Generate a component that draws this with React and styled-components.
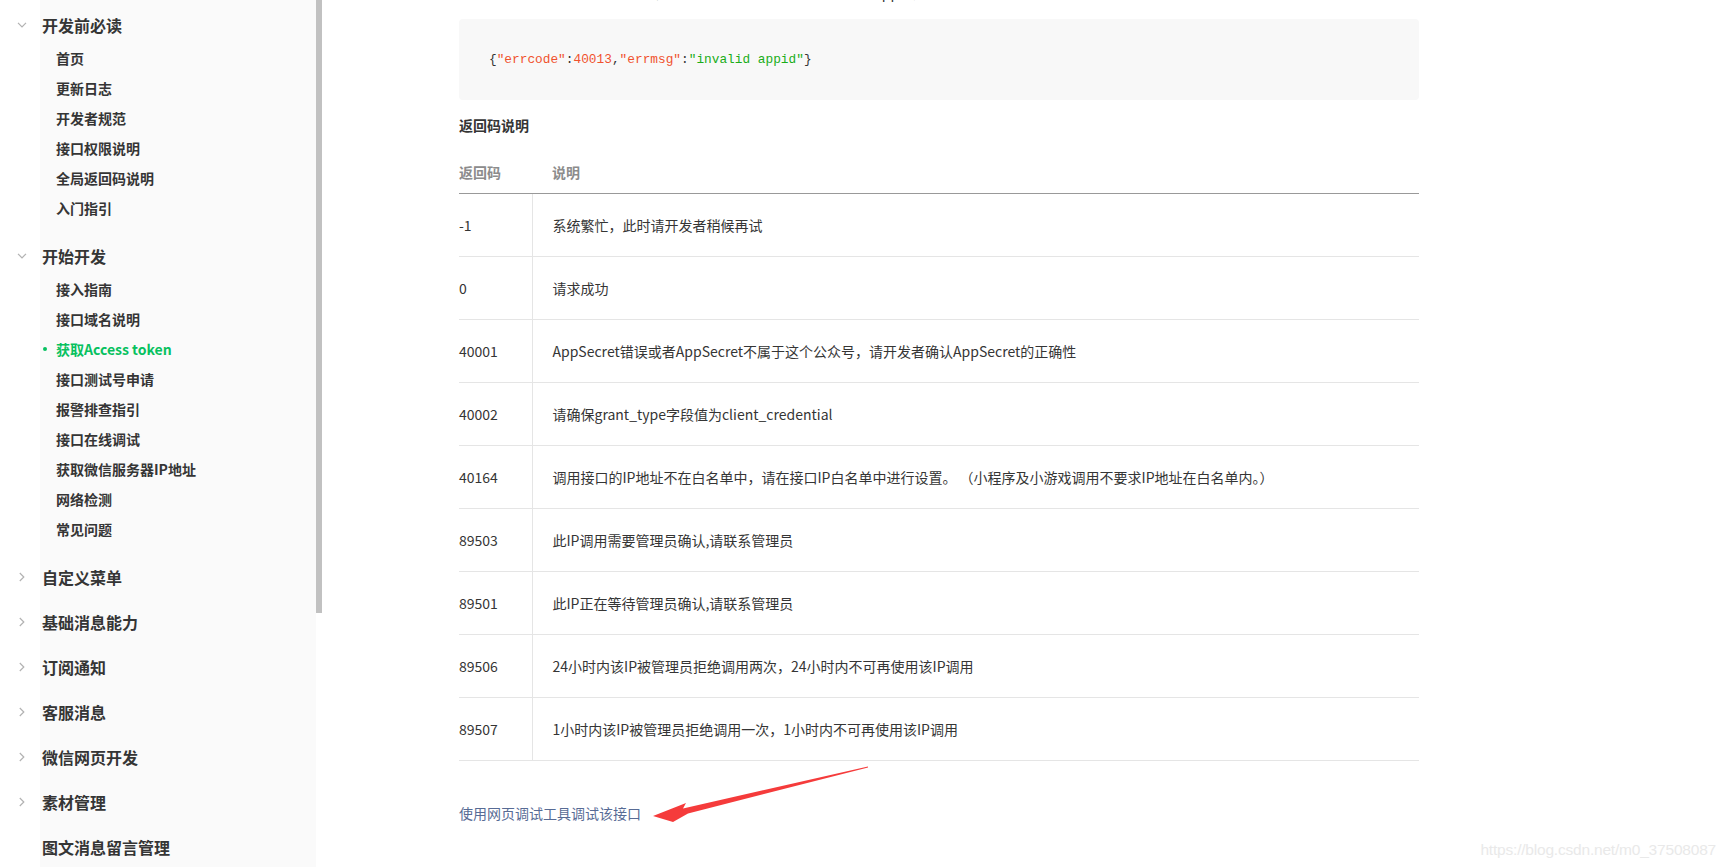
import React from "react";
import styled, { createGlobalStyle } from "styled-components";

const GlobalStyle = createGlobalStyle`
  html, body {
    margin: 0;
    padding: 0;
    overflow: hidden;
    background: #fff;
  }
  body {
    font-family: "Noto Sans CJK SC", "Open Sans", sans-serif;
    color: #353535;
  }
`;

const Page = styled.div`
  display: flex;
  height: 867px;
  position: relative;
  overflow: hidden;
`;

const Aside = styled.nav`
  width: 316px;
  flex: none;
  padding-top: 7px;
  box-sizing: border-box;
  background: linear-gradient(to right, #fff 40px, #fafafa 40px);
`;

const Scrollbar = styled.div`
  width: 6px;
  flex: none;
  background: #fff;
`;

const Thumb = styled.div`
  height: 613px;
  background: #c1c1c1;
`;

const Group = styled.div`
  padding-bottom: 9px;
`;

const GroupTitle = styled.div`
  display: flex;
  align-items: center;
  height: 36px;
  padding-left: 17px;
  gap: 15px;
  font-size: 16px;
  font-weight: 700;
  color: #353535;
`;

const IconBox = styled.span`
  width: 10px;
  display: flex;
  justify-content: center;
  align-items: center;
`;

const Children = styled.ul`
  list-style: none;
  margin: 0;
  padding: 0 0 6px;
`;

const Child = styled.li`
  position: relative;
  height: 30px;
  line-height: 30px;
  padding-left: 56px;
  font-size: 14px;
  font-weight: 700;
  color: ${(p) => (p.$active ? "#07c160" : "#353535")};

  &::before {
    content: "";
    display: ${(p) => (p.$active ? "block" : "none")};
    position: absolute;
    left: 43px;
    top: 13px;
    width: 4px;
    height: 4px;
    border-radius: 50%;
    background: #07c160;
  }
`;

const Main = styled.main`
  position: relative;
  flex: 1;
  padding-left: 137px;
`;

const Content = styled.div`
  width: 960px;
`;

const Intro = styled.p`
  margin: -20px 0 0;
  font-size: 14px;
  line-height: 24px;
`;

const CodeBlock = styled.pre`
  margin: 15px 0 0;
  padding: 30px;
  background: #f8f8f8;
  border-radius: 4px;
  font-family: "Liberation Mono", "DejaVu Sans Mono", monospace;
  font-size: 12.8px;
  line-height: 21px;
  color: #333;
`;

const Tok = styled.span`
  color: ${(p) => (p.$kind === "key" ? "#f0522e" : p.$kind === "str" ? "#1aad19" : "#333")};
`;

const Heading = styled.h4`
  margin: 13px 0 0;
  font-size: 14px;
  line-height: 24px;
  font-weight: 700;
`;

const Table = styled.table`
  margin-top: 15px;
  width: 100%;
  border-collapse: collapse;
  font-size: 14px;
`;

const Th = styled.th`
  height: 41px;
  padding: 0 0 0 ${(p) => (p.$first ? "0" : "20px")};
  width: ${(p) => (p.$first ? "73px" : "auto")};
  text-align: left;
  font-weight: 700;
  color: #8c8c8c;
  border-bottom: 1px solid #999;
  box-sizing: border-box;
`;

const Td = styled.td`
  height: 62px;
  padding: 0 0 0 ${(p) => (p.$first ? "0" : "20px")};
  border-bottom: 1px solid #e5e5e5;
  border-right: ${(p) => (p.$first ? "1px solid #e5e5e5" : "none")};
  color: #353535;
  vertical-align: middle;
`;

const DebugLink = styled.a`
  display: block;
  margin-top: 40px;
  font-size: 14px;
  line-height: 24px;
  color: #576b95;
  text-decoration: none;
`;

const ArrowSvg = styled.svg`
  position: absolute;
  left: 0;
  top: 0;
  pointer-events: none;
`;

const Watermark = styled.div`
  position: absolute;
  right: 9px;
  bottom: 8px;
  font-family: "Liberation Sans", Arial, sans-serif;
  font-size: 15.5px;
  color: #e9e9e9;
  letter-spacing: -0.2px;
`;

const ChevronDown = () => (
  <svg width="10" height="6" viewBox="0 0 10 6">
    <polyline points="1,0.8 5,4.8 9,0.8" fill="none" stroke="#b2b2b2" strokeWidth="1.2" />
  </svg>
);

const ChevronRight = () => (
  <svg width="6" height="10" viewBox="0 0 6 10">
    <polyline points="0.8,1 4.8,5 0.8,9" fill="none" stroke="#b2b2b2" strokeWidth="1.2" />
  </svg>
);

const nav = [
  {
    title: "开发前必读",
    open: true,
    items: ["首页", "更新日志", "开发者规范", "接口权限说明", "全局返回码说明", "入门指引"],
  },
  {
    title: "开始开发",
    open: true,
    items: [
      "接入指南",
      "接口域名说明",
      "获取Access token",
      "接口测试号申请",
      "报警排查指引",
      "接口在线调试",
      "获取微信服务器IP地址",
      "网络检测",
      "常见问题",
    ],
  },
  { title: "自定义菜单" },
  { title: "基础消息能力" },
  { title: "订阅通知" },
  { title: "客服消息" },
  { title: "微信网页开发" },
  { title: "素材管理" },
  { title: "图文消息留言管理", noIcon: true },
];

const codes = [
  ["-1", "系统繁忙，此时请开发者稍候再试"],
  ["0", "请求成功"],
  ["40001", "AppSecret错误或者AppSecret不属于这个公众号，请开发者确认AppSecret的正确性"],
  ["40002", "请确保grant_type字段值为client_credential"],
  ["40164", "调用接口的IP地址不在白名单中，请在接口IP白名单中进行设置。 （小程序及小游戏调用不要求IP地址在白名单内。）"],
  ["89503", "此IP调用需要管理员确认,请联系管理员"],
  ["89501", "此IP正在等待管理员确认,请联系管理员"],
  ["89506", "24小时内该IP被管理员拒绝调用两次，24小时内不可再使用该IP调用"],
  ["89507", "1小时内该IP被管理员拒绝调用一次，1小时内不可再使用该IP调用"],
];

export default function App() {
  return (
    <>
      <GlobalStyle />
      <Page>
        <Aside>
          {nav.map((g) => (
            <Group key={g.title}>
              <GroupTitle>
                <IconBox>
                  {g.noIcon ? null : g.open ? <ChevronDown /> : <ChevronRight />}
                </IconBox>
                {g.title}
              </GroupTitle>
              {g.items && (
                <Children>
                  {g.items.map((it) => (
                    <Child key={it} $active={it === "获取Access token"}>
                      {it}
                    </Child>
                  ))}
                </Children>
              )}
            </Group>
          ))}
        </Aside>
        <Scrollbar>
          <Thumb />
        </Scrollbar>
        <Main>
          <Content>
            <Intro>错误时微信会返回错误码等信息，JSON数据包示例如下（该示例为AppID无效错误）:</Intro>
            <CodeBlock>
              <Tok>{"{"}</Tok>
              <Tok $kind="key">"errcode"</Tok>
              <Tok>:</Tok>
              <Tok $kind="key">40013</Tok>
              <Tok>,</Tok>
              <Tok $kind="key">"errmsg"</Tok>
              <Tok>:</Tok>
              <Tok $kind="str">"invalid appid"</Tok>
              <Tok>{"}"}</Tok>
            </CodeBlock>
            <Heading>返回码说明</Heading>
            <Table>
              <thead>
                <tr>
                  <Th $first>返回码</Th>
                  <Th>说明</Th>
                </tr>
              </thead>
              <tbody>
                {codes.map(([code, desc]) => (
                  <tr key={code}>
                    <Td $first>{code}</Td>
                    <Td>{desc}</Td>
                  </tr>
                ))}
              </tbody>
            </Table>
            <DebugLink href="#">使用网页调试工具调试该接口</DebugLink>
          </Content>
        </Main>
        <ArrowSvg width="1725" height="867" viewBox="0 0 1725 867">
          <polygon
            points="868,766.5 683,808.5 686,803 653,816 673,822 688,813.5 868,767.5"
            fill="#f53b3b"
          />
        </ArrowSvg>
        <Watermark>https://blog.csdn.net/m0_37508087</Watermark>
      </Page>
    </>
  );
}
